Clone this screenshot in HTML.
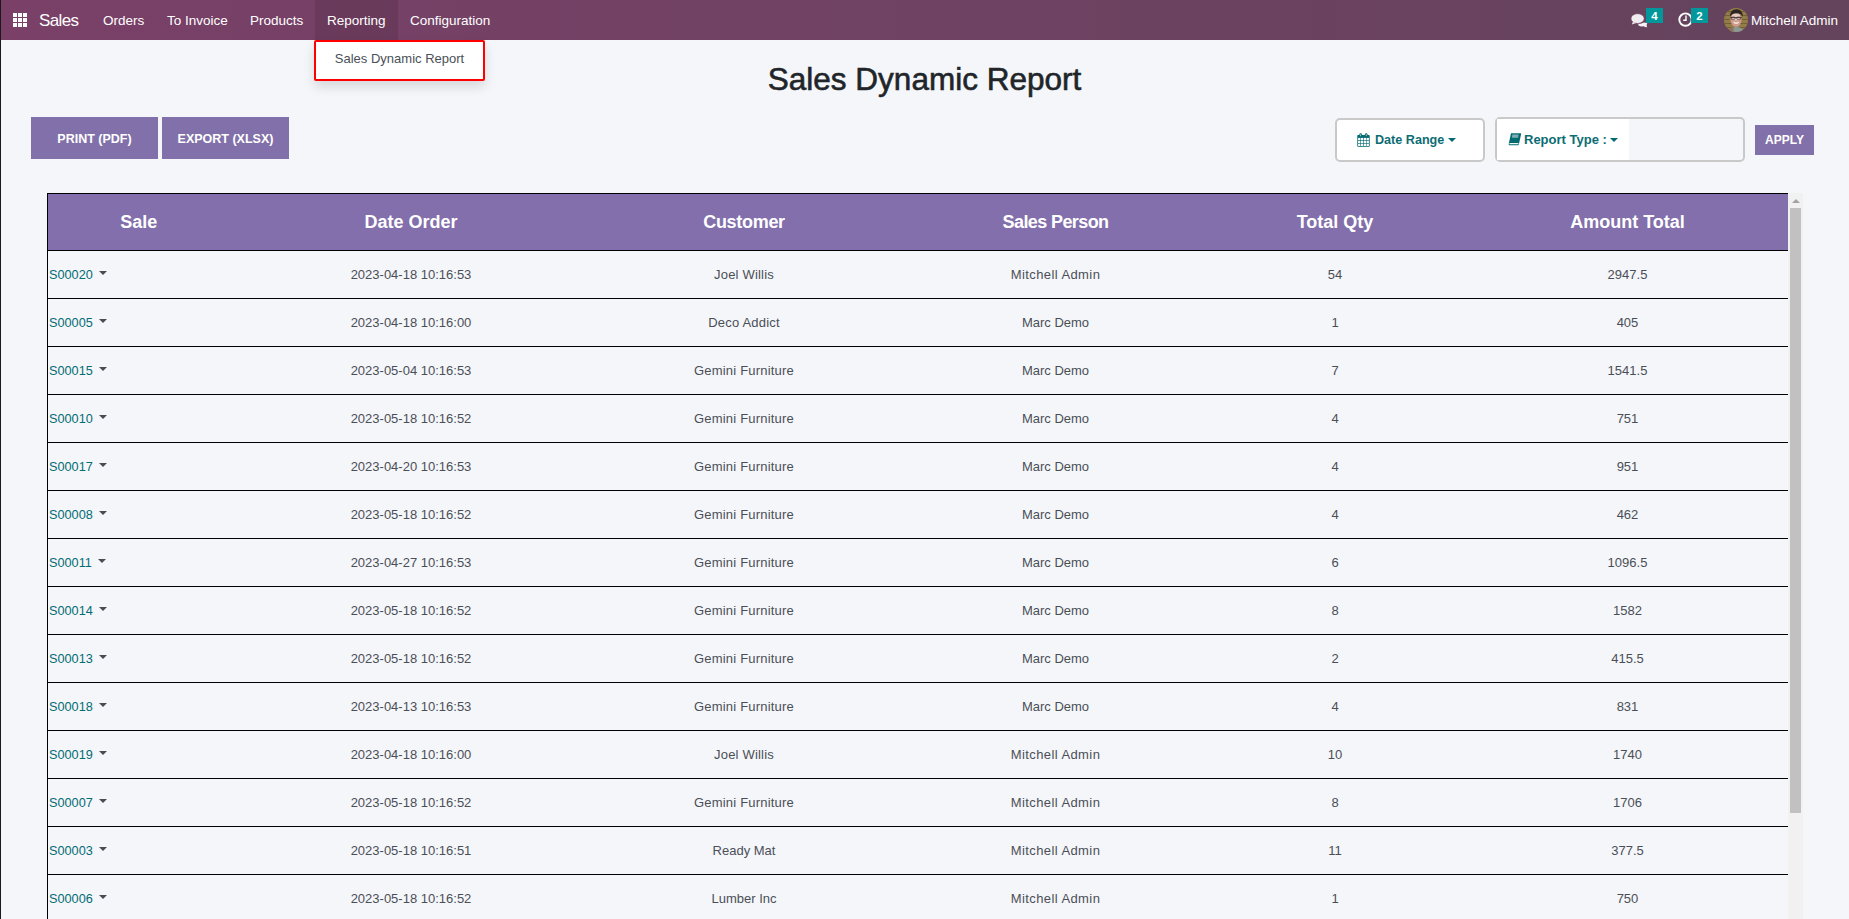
<!DOCTYPE html>
<html><head><meta charset="utf-8">
<style>
*{box-sizing:border-box;margin:0;padding:0}
html,body{width:1849px;height:919px;overflow:hidden;background:#f5f6fa;font-family:"Liberation Sans",sans-serif;}
body{position:relative}
.abs{position:absolute}
#leftline{position:absolute;left:0;top:0;width:1px;height:919px;background:#1a1a1a;z-index:50}
#nav{position:absolute;left:0;top:0;width:1849px;height:40px;background:linear-gradient(90deg,#7a4068 0%,#6f4263 50%,#64435c 100%);color:#fff}
#nav .it{position:absolute;top:1px;height:40px;line-height:40px;font-size:13.5px;color:#fff;white-space:nowrap}
#nav .brand{font-size:17px;top:1px;letter-spacing:-0.6px}
#hover{position:absolute;left:315px;top:0;width:83px;height:40px;background:rgba(0,0,0,0.1)}
.grid{position:absolute;left:13px;top:13px;width:14px;height:14px}
.grid i{position:absolute;width:4px;height:4px;background:#fff}
#dd{position:absolute;left:314px;top:40px;width:171px;height:41px;background:#fff;border:2px solid #ff0000;border-radius:2px;box-shadow:0 6px 12px rgba(0,0,0,0.12);font-size:13px;color:#495057;line-height:33px;text-align:center;z-index:20}
#title{position:absolute;left:0;top:56px;width:1849px;text-align:center;font-size:31.5px;color:#212529;line-height:46px;-webkit-text-stroke:0.6px #212529}
.btn{position:absolute;top:117px;height:42px;width:127px;background:#8270aa;color:#fff;font-weight:bold;font-size:12.5px;text-align:center;line-height:44px}
.box{position:absolute;background:#fff;border:2px solid #c9c9c9;border-radius:5px}
.teal{color:#0b6d74;font-weight:bold;font-size:13px}
#apply{position:absolute;left:1755px;top:125px;width:59px;height:30px;background:#8270aa;color:#fff;font-weight:bold;font-size:12px;text-align:center;line-height:30px}
#tbl{position:absolute;left:47px;top:193px;width:1753px;border-collapse:collapse;table-layout:fixed}
#tbl th{background:#826fab;color:#fff;font-size:18px;font-weight:bold;height:57px;border-top:1px solid #000;border-bottom:1px solid #000;text-align:center}
#tbl td{height:48px;border-bottom:1px solid #000;text-align:center;font-size:13px;color:#4a4f57}
#tbl td.s{text-align:left;padding-left:1px;color:#036c75;font-size:12.7px}
#tbl tr td:first-child,#tbl tr th:first-child{border-left:1px solid #000}
.car{display:inline-block;width:0;height:0;border-left:4px solid transparent;border-right:4px solid transparent;border-top:4px solid #4b4b55;vertical-align:4px;margin-left:6px}
#sb{position:absolute;left:1788px;top:193px;width:15px;height:726px;background:#f1f1f1}
#thumb{position:absolute;left:2px;top:15px;width:11px;height:605px;background:#c1c1c1}
#arr{position:absolute;left:3.5px;top:6px;width:0;height:0;border-left:4px solid transparent;border-right:4px solid transparent;border-bottom:4px solid #a3a3a3}
</style></head><body>
<div id="leftline"></div>
<div id="nav">
  <div id="hover"></div>
  <div class="grid">
    <i style="left:0;top:0"></i><i style="left:5px;top:0"></i><i style="left:10px;top:0"></i>
    <i style="left:0;top:5px"></i><i style="left:5px;top:5px"></i><i style="left:10px;top:5px"></i>
    <i style="left:0;top:10px"></i><i style="left:5px;top:10px"></i><i style="left:10px;top:10px"></i>
  </div>
  <div class="it brand" style="left:39px">Sales</div>
  <div class="it" style="left:103px">Orders</div>
  <div class="it" style="left:167px">To Invoice</div>
  <div class="it" style="left:250px">Products</div>
  <div class="it" style="left:327px">Reporting</div>
  <div class="it" style="left:410px">Configuration</div>
  <div class="it" style="left:1751px">Mitchell Admin</div>
</div>
<div id="dd">Sales Dynamic Report</div>
<div id="title">Sales Dynamic Report</div>
<div class="btn" style="left:31px">PRINT (PDF)</div>
<div class="btn" style="left:162px">EXPORT (XLSX)</div>
<div class="box" style="left:1335px;top:118px;width:150px;height:44px"></div>
<div class="box" style="left:1495px;top:117px;width:250px;height:45px;background:#f5f6fa"></div>

<svg class="abs" style="left:1628px;top:10px;z-index:5" width="22" height="20" viewBox="0 0 22 20">
  <path d="M10 13.6 Q13 14 15.8 12.4 Q18.6 13 19.4 12.6 Q18 16.4 19.3 17.2 Q17.4 17.4 15.5 16.3 Q12.5 16.8 10.6 15.4 Z" fill="#f7f2f6"/>
  <ellipse cx="9.6" cy="8.6" rx="6.6" ry="4.9" fill="#f1ecf0" stroke="#6b3f62" stroke-width="0.6"/>
  <path d="M5 11.8 L3.8 14.6 L8.2 12.9 Z" fill="#f1ecf0"/>
</svg>
<div class="abs" style="left:1646px;top:8px;width:17px;height:15px;background:#01979b;color:#fff;font-size:11.5px;font-weight:bold;line-height:16px;text-align:center;z-index:6">4</div>
<svg class="abs" style="left:1676px;top:10px;z-index:5" width="20" height="20" viewBox="0 0 20 20">
  <circle cx="9.5" cy="9.6" r="6.2" fill="none" stroke="#fff" stroke-width="1.9"/>
  <path d="M10 5.6 V10.3 H7.2" fill="none" stroke="#fff" stroke-width="1.4"/>
</svg>
<div class="abs" style="left:1691px;top:8px;width:17px;height:15px;background:#01979b;color:#fff;font-size:11.5px;font-weight:bold;line-height:16px;text-align:center;z-index:6">2</div>
<svg class="abs" style="left:1724px;top:8px;z-index:5" width="24" height="24" viewBox="0 0 24 24">
  <defs><clipPath id="avc"><circle cx="12" cy="12" r="12"/></clipPath></defs>
  <g clip-path="url(#avc)">
  <rect width="24" height="24" fill="#927d47"/>
  <path d="M0 3.5H24M0 7.5H24M0 11.5H24M0 15.5H24M0 19.5H24" stroke="#6e5d35" stroke-width="0.9"/>
  <path d="M6 24 Q8 18.5 12 19 Q17 18.5 21 24 Z" fill="#8b9896"/>
  <path d="M3 24 Q5 19 9 18.8 L10 24 Z" fill="#8f7258"/>
  <ellipse cx="12" cy="11.4" rx="5.6" ry="7.4" fill="#cf9a8a"/>
  <ellipse cx="12" cy="9" rx="4.2" ry="3.6" fill="#e7ccc4"/>
  <path d="M6 8.8 Q5.8 1.5 12.5 1.2 Q18.8 1.4 18.8 8.8 Q17.8 5.2 12.2 5.2 Q7.6 5.2 6 8.8 Z" fill="#2d2521"/>
  <path d="M6.2 9.6 H17.8" stroke="#3b302c" stroke-width="0.9"/>
  <rect x="7.3" y="9" width="3.8" height="2.4" rx="0.8" fill="none" stroke="#3b302c" stroke-width="0.6"/>
  <rect x="12.7" y="9" width="3.8" height="2.4" rx="0.8" fill="none" stroke="#3b302c" stroke-width="0.6"/>
  <path d="M9.5 14.3 Q12.2 16.2 14.8 14.3" stroke="#f5eeee" stroke-width="1.3" fill="none"/>
  </g>
</svg>
<svg class="abs" style="left:1357px;top:133px" width="13" height="14" viewBox="0 0 13 14">
  <rect x="0.3" y="2" width="12.4" height="11.8" rx="0.8" fill="#026b72"/>
  <rect x="2.4" y="0.3" width="2.6" height="3.6" rx="1.2" fill="#026b72"/>
  <rect x="7.9" y="0.3" width="2.6" height="3.6" rx="1.2" fill="#026b72"/>
  <rect x="3.3" y="1.2" width="0.8" height="2" fill="#bfe3dc"/>
  <rect x="8.8" y="1.2" width="0.8" height="2" fill="#f0d0b0"/>
  <g fill="#fff">
   <rect x="1.1" y="4.9" width="2.3" height="2.3"/><rect x="4.0" y="4.9" width="2.3" height="2.3"/><rect x="6.9" y="4.9" width="2.3" height="2.3"/><rect x="9.7" y="4.9" width="2.2" height="2.3"/>
   <rect x="1.1" y="7.8" width="2.3" height="2.3"/><rect x="4.0" y="7.8" width="2.3" height="2.3"/><rect x="6.9" y="7.8" width="2.3" height="2.3"/><rect x="9.7" y="7.8" width="2.2" height="2.3"/>
   <rect x="1.1" y="10.7" width="2.3" height="2.3"/><rect x="4.0" y="10.7" width="2.3" height="2.3"/><rect x="6.9" y="10.7" width="2.3" height="2.3"/><rect x="9.7" y="10.7" width="2.2" height="2.3"/>
  </g>
</svg>
<div class="abs teal" style="left:1375px;top:132px;line-height:16px;font-size:12.6px">Date Range</div>
<div class="abs" style="left:1448px;top:138px;width:0;height:0;border-left:4px solid transparent;border-right:4px solid transparent;border-top:4px solid #026b72"></div>
<div class="abs" style="left:1497px;top:119px;width:132px;height:41px;background:#fff"></div>
<svg class="abs" style="left:1508px;top:133px" width="14" height="13" viewBox="0 0 14 13">
  <path d="M3 0.3 H12.5 Q13.3 0.3 13.1 1.2 L10.9 11.2 Q10.7 12.2 9.8 12.2 H1.5 Q0.4 12.2 0.7 11 L3 0.3 Z" fill="#026b72"/>
  <path d="M1.5 10 H10.5 L10.2 11.2 H1.3 Z" fill="#eef4f4"/>
  <path d="M4.4 1.5 H10.6 L10.1 4.8 H3.8 Z" fill="#7faeb0"/>
</svg>
<div class="abs teal" style="left:1524px;top:132px;line-height:16px">Report Type :</div>
<div class="abs" style="left:1610px;top:138px;width:0;height:0;border-left:4px solid transparent;border-right:4px solid transparent;border-top:4px solid #026b72"></div>
<div id="apply">APPLY</div>
<table id="tbl">
<colgroup><col style="width:182px"><col style="width:363px"><col style="width:303px"><col style="width:320px"><col style="width:239px"><col style="width:346px"></colgroup>
<thead><tr><th>Sale</th><th>Date Order</th><th style="letter-spacing:-0.3px">Customer</th><th style="letter-spacing:-0.6px">Sales Person</th><th>Total Qty</th><th>Amount Total</th></tr></thead>
<tbody>
<tr><td class="s">S00020<span class="car"></span></td><td>2023-04-18 10:16:53</td><td style="letter-spacing:0.2px">Joel Willis</td><td style="letter-spacing:0.42px">Mitchell Admin</td><td>54</td><td>2947.5</td></tr>
<tr><td class="s">S00005<span class="car"></span></td><td>2023-04-18 10:16:00</td><td style="letter-spacing:0.2px">Deco Addict</td><td>Marc Demo</td><td>1</td><td>405</td></tr>
<tr><td class="s">S00015<span class="car"></span></td><td>2023-05-04 10:16:53</td><td style="letter-spacing:0.2px">Gemini Furniture</td><td>Marc Demo</td><td>7</td><td>1541.5</td></tr>
<tr><td class="s">S00010<span class="car"></span></td><td>2023-05-18 10:16:52</td><td style="letter-spacing:0.2px">Gemini Furniture</td><td>Marc Demo</td><td>4</td><td>751</td></tr>
<tr><td class="s">S00017<span class="car"></span></td><td>2023-04-20 10:16:53</td><td style="letter-spacing:0.2px">Gemini Furniture</td><td>Marc Demo</td><td>4</td><td>951</td></tr>
<tr><td class="s">S00008<span class="car"></span></td><td>2023-05-18 10:16:52</td><td style="letter-spacing:0.2px">Gemini Furniture</td><td>Marc Demo</td><td>4</td><td>462</td></tr>
<tr><td class="s">S00011<span class="car"></span></td><td>2023-04-27 10:16:53</td><td style="letter-spacing:0.2px">Gemini Furniture</td><td>Marc Demo</td><td>6</td><td>1096.5</td></tr>
<tr><td class="s">S00014<span class="car"></span></td><td>2023-05-18 10:16:52</td><td style="letter-spacing:0.2px">Gemini Furniture</td><td>Marc Demo</td><td>8</td><td>1582</td></tr>
<tr><td class="s">S00013<span class="car"></span></td><td>2023-05-18 10:16:52</td><td style="letter-spacing:0.2px">Gemini Furniture</td><td>Marc Demo</td><td>2</td><td>415.5</td></tr>
<tr><td class="s">S00018<span class="car"></span></td><td>2023-04-13 10:16:53</td><td style="letter-spacing:0.2px">Gemini Furniture</td><td>Marc Demo</td><td>4</td><td>831</td></tr>
<tr><td class="s">S00019<span class="car"></span></td><td>2023-04-18 10:16:00</td><td style="letter-spacing:0.2px">Joel Willis</td><td style="letter-spacing:0.42px">Mitchell Admin</td><td>10</td><td>1740</td></tr>
<tr><td class="s">S00007<span class="car"></span></td><td>2023-05-18 10:16:52</td><td style="letter-spacing:0.2px">Gemini Furniture</td><td style="letter-spacing:0.42px">Mitchell Admin</td><td>8</td><td>1706</td></tr>
<tr><td class="s">S00003<span class="car"></span></td><td>2023-05-18 10:16:51</td><td>Ready Mat</td><td style="letter-spacing:0.42px">Mitchell Admin</td><td>11</td><td>377.5</td></tr>
<tr><td class="s">S00006<span class="car"></span></td><td>2023-05-18 10:16:52</td><td>Lumber Inc</td><td style="letter-spacing:0.42px">Mitchell Admin</td><td>1</td><td>750</td></tr>
</tbody>
</table>
<div id="sb"><div id="arr"></div><div id="thumb"></div></div>
</body></html>
